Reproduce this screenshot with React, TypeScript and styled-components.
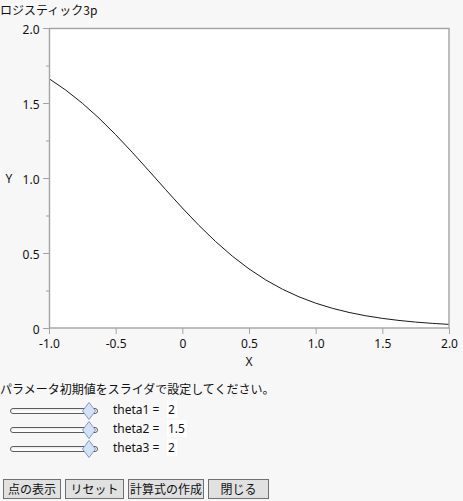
import React from "react";
import styled, { createGlobalStyle } from "styled-components";

const Global = createGlobalStyle`
  html, body { margin: 0; padding: 0; }
  body {
    background: #f7f7f7;
    color: #111;
    font-family: "Noto Sans", "Noto Sans CJK JP", sans-serif;
    font-size: 12px;
  }
`;

const Page = styled.div`
  width: 463px;
  display: flex;
  flex-direction: column;
`;

const Title = styled.div`
  height: 20px;
  line-height: 20px;
  font-family: "Noto Sans CJK JP", sans-serif;
  font-size: 12px;
  padding-left: 0;
`;

const ChartGrid = styled.div`
  display: grid;
  grid-template-columns: 20px 443px;
  grid-template-rows: 332px 20px;
`;

const YTitle = styled.div`
  margin-top: 8px;
  height: 300px;
  display: flex;
  align-items: center;
  justify-content: center;
  padding-right: 2px;
  font-size: 12px;
`;

const XTitle = styled.div`
  grid-column: 2;
  margin-left: 29px;
  width: 400px;
  text-align: center;
  line-height: 20px;
  font-size: 12px;
`;

const Instruction = styled.div`
  margin-top: 8px;
  line-height: 18px;
  font-family: "Noto Sans CJK JP", sans-serif;
  font-size: 12px;
`;

const SliderList = styled.div`
  display: flex;
  flex-direction: column;
  margin-top: 3px;
`;

const SliderRow = styled.div`
  height: 19px;
  display: flex;
  align-items: center;
`;

const Track = styled.div`
  position: relative;
  margin-left: 10px;
  width: 88px;
  height: 6px;
  box-sizing: border-box;
  border: 1px solid #5c5c5c;
  border-radius: 3px;
  background: linear-gradient(#e8e8e8, #fdfdfd 50%);
`;

const Thumb = styled.svg`
  position: absolute;
  left: 71px;
  top: -7px;
`;

const ParamLabel = styled.div`
  margin-left: 15px;
  display: flex;
  align-items: center;
  padding-bottom: 3px;
  font-size: 12px;
`;

const ParamName = styled.span`
  width: 54px;
`;

const ParamValue = styled.span`
  background: #ffffff;
  padding: 0 2px 0 1px;
  line-height: 17px;
`;

const ButtonBar = styled.div`
  margin-top: 21px;
  padding-left: 3px;
  display: flex;
  gap: 4px;
`;

const Button = styled.button<{ $w: number }>`
  width: ${(p) => p.$w}px;
  height: 20px;
  box-sizing: border-box;
  border: 1px solid #707070;
  background: #e1e1e1;
  padding: 0;
  margin: 0;
  font-family: "Noto Sans CJK JP", sans-serif;
  font-size: 12px;
  color: #111;
  line-height: 18px;
`;

const X0 = 29;
const Y0 = 8;
const W = 400;
const H = 300;
const xmin = -1;
const xmax = 2;
const ymin = 0;
const ymax = 2;

const px = (x: number) => X0 + ((x - xmin) / (xmax - xmin)) * W;
const py = (y: number) => Y0 + H - ((y - ymin) / (ymax - ymin)) * H;

const f = (x: number) => 2 / (1 + 1.5 * Math.exp(2 * x));

const curvePts = (() => {
  const pts: string[] = [];
  const n = 24;
  for (let i = 0; i <= n; i++) {
    const x = xmin + ((xmax - xmin) * i) / n;
    pts.push(`${px(x).toFixed(2)},${py(f(x)).toFixed(2)}`);
  }
  return pts.join(" ");
})();

const xTicks = [-1, -0.5, 0, 0.5, 1, 1.5, 2];
const xLabels = ["-1.0", "-0.5", "0", "0.5", "1.0", "1.5", "2.0"];
const yTicks = [0, 0.5, 1, 1.5, 2];
const yLabels = ["0", "0.5", "1.0", "1.5", "2.0"];
const yMinor = [0.25, 0.75, 1.25, 1.75];

const axisColor = "#a3a3a3";

const Chart: React.FC = () => (
  <svg width={443} height={332} style={{ display: "block" }}>
    <rect x={X0} y={Y0} width={W} height={H} fill="#ffffff" />
    <polyline points={curvePts} fill="none" stroke="#1a1a1a" strokeWidth={1} />
    <rect
      x={X0 + 0.5}
      y={Y0 + 0.5}
      width={W - 0.5}
      height={H - 0.5}
      fill="none"
      stroke={axisColor}
      strokeWidth={1.4}
    />
    {yTicks.map((v, i) => (
      <g key={"y" + v}>
        <line x1={X0 - 6} x2={X0} y1={py(v) + 0.5} y2={py(v) + 0.5} stroke={axisColor} />
        <text
          x={X0 - 9.5}
          y={py(v) + 1}
          textAnchor="end"
          dominantBaseline="central"
          fontSize={12}
          fontFamily='"Noto Sans", sans-serif'
          fill="#111"
        >
          {yLabels[i]}
        </text>
      </g>
    ))}
    {yMinor.map((v) => (
      <line key={"m" + v} x1={X0 - 3} x2={X0} y1={py(v) + 0.5} y2={py(v) + 0.5} stroke={axisColor} />
    ))}
    {xTicks.map((v, i) => (
      <g key={"x" + v}>
        <line x1={px(v) + 0.5} x2={px(v) + 0.5} y1={Y0 + H} y2={Y0 + H + 6} stroke={axisColor} />
        <text
          x={px(v) + 0.5}
          y={Y0 + H + 15}
          textAnchor="middle"
          dominantBaseline="central"
          fontSize={12}
          fontFamily='"Noto Sans", sans-serif'
          fill="#111"
        >
          {xLabels[i]}
        </text>
      </g>
    ))}
  </svg>
);

const params = [
  { name: "theta1 =", value: "2" },
  { name: "theta2 =", value: "1.5" },
  { name: "theta3 =", value: "2" },
];

const buttons = [
  { label: "点の表示", w: 58 },
  { label: "リセット", w: 59 },
  { label: "計算式の作成", w: 76 },
  { label: "閉じる", w: 61 },
];

export default function App() {
  return (
    <Page>
      <Global />
      <Title>ロジスティック3p</Title>
      <ChartGrid>
        <YTitle>Y</YTitle>
        <Chart />
        <XTitle>X</XTitle>
      </ChartGrid>
      <Instruction>パラメータ初期値をスライダで設定してください。</Instruction>
      <SliderList>
        {params.map((p) => (
          <SliderRow key={p.name}>
            <Track>
              <Thumb width={14} height={18} viewBox="0 0 14 18">
                <polygon
                  points="7,0.5 13.5,9 7,17.5 0.5,9"
                  fill="#d3e2f5"
                  stroke="#7b9bc6"
                  strokeWidth={1}
                />
              </Thumb>
            </Track>
            <ParamLabel>
              <ParamName>{p.name}</ParamName>
              <ParamValue>{p.value}</ParamValue>
            </ParamLabel>
          </SliderRow>
        ))}
      </SliderList>
      <ButtonBar>
        {buttons.map((b) => (
          <Button key={b.label} $w={b.w}>
            {b.label}
          </Button>
        ))}
      </ButtonBar>
    </Page>
  );
}
